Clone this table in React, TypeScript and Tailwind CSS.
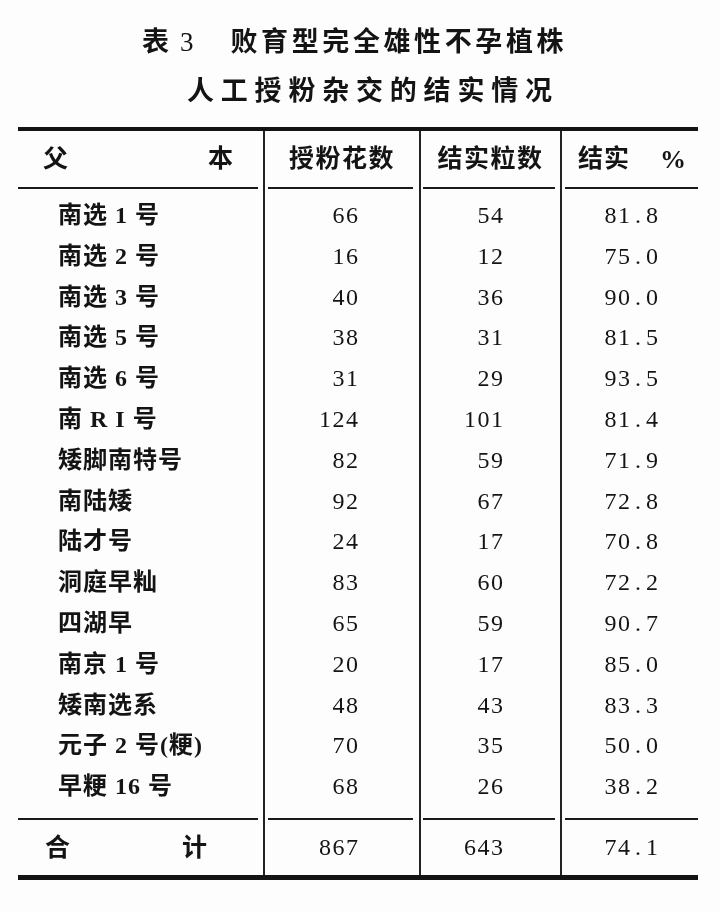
import React from "react";

const rows: [string, string, string, string][] = [
  ["南选 1 号", "66", "54", "81.8"],
  ["南选 2 号", "16", "12", "75.0"],
  ["南选 3 号", "40", "36", "90.0"],
  ["南选 5 号", "38", "31", "81.5"],
  ["南选 6 号", "31", "29", "93.5"],
  ["南 R I 号", "124", "101", "81.4"],
  ["矮脚南特号", "82", "59", "71.9"],
  ["南陆矮", "92", "67", "72.8"],
  ["陆才号", "24", "17", "70.8"],
  ["洞庭早籼", "83", "60", "72.2"],
  ["四湖早", "65", "59", "90.7"],
  ["南京 1 号", "20", "17", "85.0"],
  ["矮南选系", "48", "43", "83.3"],
  ["元子 2 号(粳)", "70", "35", "50.0"],
  ["早粳 16 号", "68", "26", "38.2"],
];

function Dec({ v }: { v: string }) {
  const [a, b] = v.split(".");
  return (
    <span>
      {a}
      <span className="mx-[3.5px]">.</span>
      {b}
    </span>
  );
}

function RuleRow() {
  return (
    <div className="grid grid-cols-[245px_156px_141px_138px]">
      <div className="flex items-center h-[2px]">
        <div className="h-[2px] w-full bg-[#1a1a1a] mr-[5px]" />
      </div>
      <div className="flex items-center h-[2px] border-l-2 border-[#222]">
        <div className="h-[2px] w-full bg-[#1a1a1a] ml-[3px] mr-[6px]" />
      </div>
      <div className="flex items-center h-[2px] border-l-2 border-[#222]">
        <div className="h-[2px] w-full bg-[#1a1a1a] ml-[2px] mr-[5px]" />
      </div>
      <div className="flex items-center h-[2px] border-l-2 border-[#222]">
        <div className="h-[2px] w-full bg-[#1a1a1a] ml-[3px]" />
      </div>
    </div>
  );
}

export default function App() {
  return (
    <div
      className="w-[720px] h-[912px] bg-[#fdfdfd] text-[#141414] overflow-hidden blur-[0.35px]"
      style={{ fontFamily: '"Liberation Serif", "Noto Sans CJK SC", serif' }}
    >
      {/* Title */}
      <div className="pt-[24px] pl-[142px] flex items-center h-[60px] text-[27px] leading-[36px] font-bold">
        <span>表</span>
        <span className="ml-[11px] font-normal">3</span>
        <span className="ml-[37px] tracking-[3.6px]">败育型完全雄性不孕植株</span>
      </div>
      <div className="mt-[13px] pl-[187px] h-[36px] flex items-center text-[27px] leading-[36px] font-bold tracking-[6.8px]">
        人工授粉杂交的结实情况
      </div>

      {/* Table */}
      <div className="mt-[18px] ml-[18px] w-[680px]">
        <div className="h-[4px] bg-[#141414]" />
        <div className="grid grid-cols-[245px_156px_141px_138px] h-[56px] text-[25px] font-bold">
          <div className="flex items-center justify-between pl-[25px] pr-[30px]">
            <span>父</span>
            <span>本</span>
          </div>
          <div className="flex items-center justify-center border-l-2 border-[#222] tracking-[1.5px]">
            授粉花数
          </div>
          <div className="flex items-center justify-center border-l-2 border-[#222] tracking-[1.5px]">
            结实粒数
          </div>
          <div className="flex items-center justify-center gap-[30px] border-l-2 border-[#222] pl-[4px]">
            <span className="tracking-[1px]">结实</span>
            <span className="text-[26px]">%</span>
          </div>
        </div>
        <RuleRow />
        <div className="grid grid-cols-[245px_156px_141px_138px] h-[6px]">
          <div />
          <div className="border-l-2 border-[#222]" />
          <div className="border-l-2 border-[#222]" />
          <div className="border-l-2 border-[#222]" />
        </div>
        {rows.map((r) => (
          <div
            key={r[0]}
            className="grid grid-cols-[245px_156px_141px_138px] h-[40.8px] text-[24px] leading-[40.8px]"
          >
            <div className="pl-[40px] font-bold tracking-[1px]">{r[0]}</div>
            <div className="border-l-2 border-[#222] text-right pr-[59.5px] tracking-[1.5px]">{r[1]}</div>
            <div className="border-l-2 border-[#222] text-right pr-[55.5px] tracking-[1.5px]">{r[2]}</div>
            <div className="border-l-2 border-[#222] text-right pr-[38.5px] tracking-[1.5px]">
              <Dec v={r[3]} />
            </div>
          </div>
        ))}
        <div className="grid grid-cols-[245px_156px_141px_138px] h-[11px]">
          <div />
          <div className="border-l-2 border-[#222]" />
          <div className="border-l-2 border-[#222]" />
          <div className="border-l-2 border-[#222]" />
        </div>
        <RuleRow />
        <div className="grid grid-cols-[245px_156px_141px_138px] h-[55px] text-[24px]">
          <div className="flex items-center justify-between pl-[27px] pr-[56px] text-[25px] font-bold">
            <span>合</span>
            <span>计</span>
          </div>
          <div className="flex items-center justify-end border-l-2 border-[#222] pr-[59.5px] tracking-[1.5px]">867</div>
          <div className="flex items-center justify-end border-l-2 border-[#222] pr-[55.5px] tracking-[1.5px]">643</div>
          <div className="flex items-center justify-end border-l-2 border-[#222] pr-[38.5px] tracking-[1.5px]">
            <Dec v="74.1" />
          </div>
        </div>
        <div className="h-[5px] bg-[#141414]" />
      </div>
    </div>
  );
}
